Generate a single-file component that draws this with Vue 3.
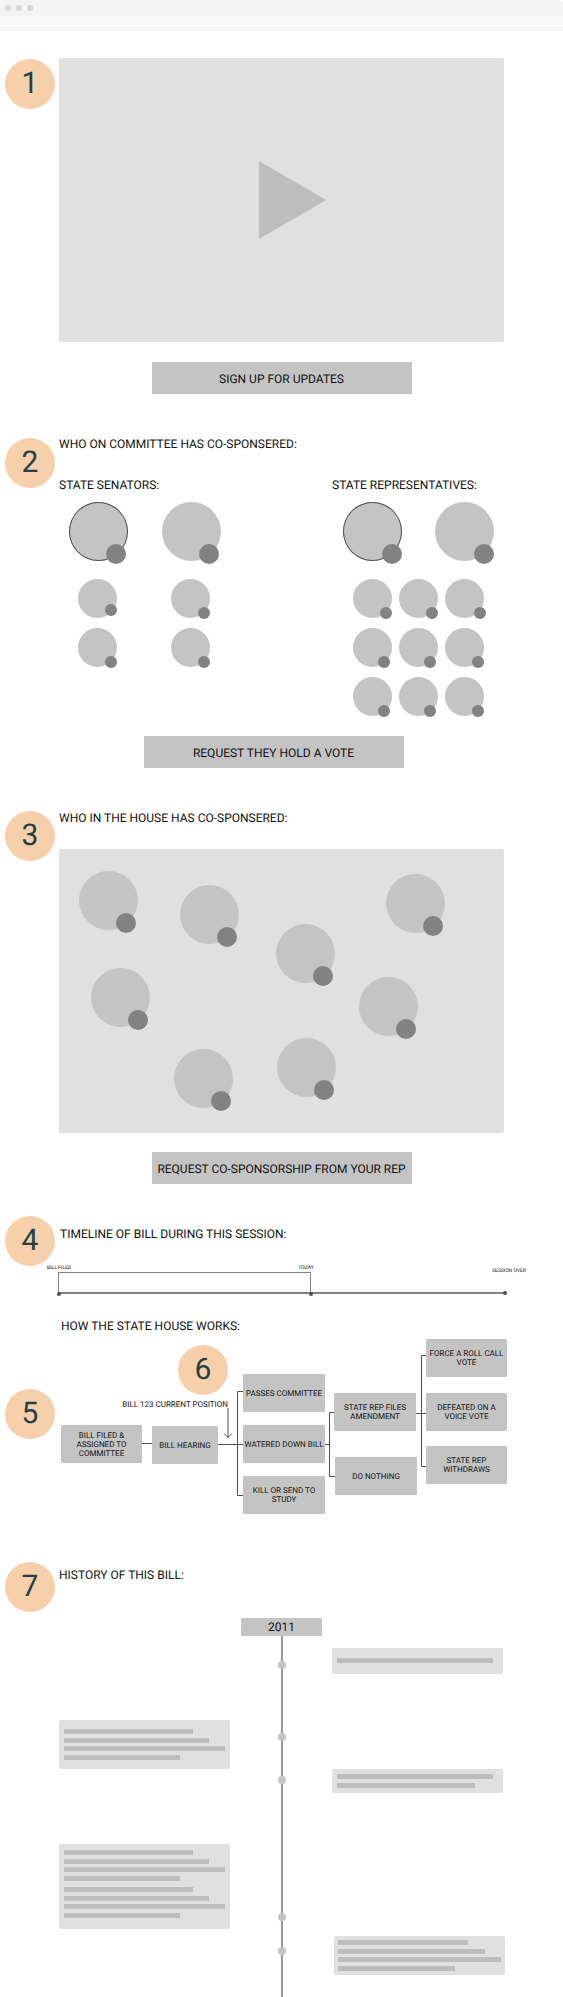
<script setup>
const CANVAS_WIDTH = 563
const pct = (n, total = CANVAS_WIDTH) => (n / total) * 100 + '%'

const senators = ['raised', '', '', '']
const representatives = ['', '', 'out', 'in', 'in', '', 'in', 'in', '']

const housePins = [
  { x: 20, y: 22 },
  { x: 121, y: 36 },
  { x: 327, y: 25 },
  { x: 217, y: 75 },
  { x: 32, y: 119 },
  { x: 300, y: 128 },
  { x: 115, y: 201 },
  { x: 218, y: 190 },
]
const pinStyle = (p) => ({ left: pct(p.x, 445), top: pct(p.y, 285) })

const sessionMarks = [
  { label: 'BILL FILED', x: 59, y: 2 },
  { label: 'TODAY', x: 306, y: 2 },
  { label: 'SESSION OVER', x: 509, y: 5 },
]
const sessionDots = [
  { x: 59, y: 28 },
  { x: 311, y: 28 },
  { x: 505, y: 27 },
]

const steps = [
  { text: 'BILL FILED &\nASSIGNED TO\nCOMMITTEE', x: 61, y: 86, w: 81 },
  { text: 'BILL HEARING', x: 152, y: 87, w: 66 },
  { text: 'PASSES COMMITTEE', x: 243, y: 35, w: 82 },
  { text: 'WATERED DOWN BILL', x: 243, y: 86, w: 82 },
  { text: 'KILL OR SEND TO\nSTUDY', x: 243, y: 137, w: 82 },
  { text: 'STATE REP FILES\nAMENDMENT', x: 334, y: 54, w: 82 },
  { text: 'DO NOTHING', x: 335, y: 118, w: 82 },
  { text: 'FORCE A ROLL CALL\nVOTE', x: 426, y: 0, w: 81 },
  { text: 'DEFEATED ON A\nVOICE VOTE', x: 426, y: 54, w: 81 },
  { text: 'STATE REP\nWITHDRAWS', x: 426, y: 107, w: 81 },
]
const stepStyle = (s) => ({ left: pct(s.x), top: s.y + 'px', width: pct(s.w) })

const fourLines = [[80, 90, 100, 72]]
const leftCards = [
  { kind: 'first', groups: fourLines },
  { kind: 'second', groups: [fourLines[0], fourLines[0]] },
]
const rightCards = [
  { kind: 'first', groups: [[97]] },
  { kind: 'second', groups: [[97, 86]] },
  { kind: 'third', groups: fourLines },
]
const historyDots = [25, 97, 140, 277, 311]
</script>

<template>
  <div class="page">
    <header class="chrome">
      <div class="chrome-tabs"><i></i><i></i><i></i></div>
      <div class="chrome-bar"></div>
    </header>

    <main>
      <section class="block intro">
        <span class="badge">1</span>
        <div class="content">
          <button class="video" type="button" aria-label="Play video">
            <svg viewBox="0 0 67 78" aria-hidden="true"><path d="M0 0L67 39L0 78Z" /></svg>
          </button>
          <button class="cta" type="button">SIGN UP FOR UPDATES</button>
        </div>
      </section>

      <section class="block committee">
        <span class="badge">2</span>
        <div class="content">
          <h2>WHO ON COMMITTEE HAS CO-SPONSERED:</h2>
          <div class="chambers">
            <div class="chamber senate">
              <h3>STATE SENATORS:</h3>
              <div class="leaders">
                <span class="avatar outlined"><i></i></span>
                <span class="avatar"><i></i></span>
              </div>
              <div class="members">
                <span v-for="(m, i) in senators" :key="i" class="avatar small" :class="m"><i></i></span>
              </div>
            </div>
            <div class="chamber house">
              <h3>STATE REPRESENTATIVES:</h3>
              <div class="leaders">
                <span class="avatar outlined"><i></i></span>
                <span class="avatar"><i></i></span>
              </div>
              <div class="members">
                <span v-for="(m, i) in representatives" :key="i" class="avatar small" :class="m"><i></i></span>
              </div>
            </div>
          </div>
          <div class="vote-row">
            <button class="cta" type="button">REQUEST THEY HOLD A VOTE</button>
          </div>
        </div>
      </section>

      <section class="block sponsors">
        <span class="badge">3</span>
        <div class="content">
          <h2>WHO IN THE HOUSE HAS CO-SPONSERED:</h2>
          <div class="map">
            <span v-for="(p, i) in housePins" :key="i" class="avatar pin" :style="pinStyle(p)"><i></i></span>
          </div>
          <button class="cta" type="button">REQUEST CO-SPONSORSHIP FROM YOUR REP</button>
        </div>
      </section>

      <section class="session">
        <div class="block">
          <span class="badge">4</span>
          <div class="content">
            <h2>TIMELINE OF BILL DURING THIS SESSION:</h2>
          </div>
        </div>
        <div class="session-line">
          <svg viewBox="0 0 563 32" preserveAspectRatio="none" aria-hidden="true">
            <path class="thin" d="M58.5 27V6.5H310.5V27" />
            <path class="thick" d="M58.5 27H505" />
          </svg>
          <i v-for="d in sessionDots" :key="d.x" :style="{ left: pct(d.x), top: d.y + 'px' }"></i>
          <span v-for="m in sessionMarks" :key="m.label" :style="{ left: pct(m.x), top: m.y + 'px' }">{{ m.label }}</span>
        </div>
      </section>

      <section class="process">
        <h2>HOW THE STATE HOUSE WORKS:</h2>
        <div class="flow">
          <svg viewBox="0 0 563 176" preserveAspectRatio="none" aria-hidden="true">
            <path d="M142 104.500H152M218 105.500H243M243 52.500H237.500V156.500H243" />
            <path d="M324 105.500H329.500M335 73.500H329.500V137.500H336" />
            <path d="M415 74.500H426M426 16.500H421.500V127.500H426" />
            <path class="arrow" d="M228 69V98.500M224 94.500L228 98.500L232 94.500" />
          </svg>
          <span class="badge five">5</span>
          <span class="badge six">6</span>
          <span class="position">BILL 123 CURRENT POSITION</span>
          <div v-for="s in steps" :key="s.text" class="step" :style="stepStyle(s)">{{ s.text }}</div>
        </div>
      </section>

      <section class="block history">
        <span class="badge">7</span>
        <div class="content">
          <h2>HISTORY OF THIS BILL:</h2>
          <div class="events">
            <div class="cards left">
              <article v-for="c in leftCards" :key="c.kind" class="card" :class="c.kind">
                <div v-for="(g, i) in c.groups" :key="i" class="lines" :class="'n' + g.length">
                  <i v-for="w in g" :key="w" :style="{ width: w + '%' }"></i>
                </div>
              </article>
            </div>
            <div class="axis">
              <div class="year">2011</div>
              <div class="rail">
                <i v-for="y in historyDots" :key="y" :style="{ top: y + 'px' }"></i>
              </div>
            </div>
            <div class="cards right">
              <article v-for="c in rightCards" :key="c.kind" class="card" :class="c.kind">
                <div v-for="(g, i) in c.groups" :key="i" class="lines" :class="'n' + g.length">
                  <i v-for="w in g" :key="w" :style="{ width: w + '%' }"></i>
                </div>
              </article>
            </div>
          </div>
        </div>
      </section>
    </main>
  </div>
</template>

<style>
body {
  margin: 0;
  background: #fefefe;
}
</style>

<style scoped>
.page {
  font-family: Roboto, "Liberation Sans", sans-serif;
  font-size: 12px;
  line-height: 16px;
  color: #111;
  text-rendering: geometricPrecision;
}
.page * {
  box-sizing: border-box;
}
h2,
h3 {
  margin: 0;
  font-size: 12px;
  font-weight: 400;
  line-height: 16px;
}
button {
  border: 0;
  padding: 0;
  font: inherit;
  color: inherit;
  text-rendering: inherit;
  cursor: pointer;
}

.chrome-tabs {
  display: flex;
  align-items: center;
  gap: 5px;
  height: 16px;
  padding: 0 5px;
  background: #f4f4f4;
  border-radius: 3px 3px 0 0;
}
.chrome-tabs i {
  width: 6px;
  height: 6px;
  border-radius: 50%;
  background: #d8d8d8;
}
.chrome-bar {
  height: 15px;
  background: #f8f8f8;
  border-bottom: 1px solid #f4f4f4;
}

.block {
  display: grid;
  grid-template-columns: 59px minmax(0, 1fr) 59px;
}
.content {
  display: flex;
  flex-direction: column;
}
.badge {
  display: flex;
  align-items: center;
  justify-content: center;
  width: 50px;
  height: 50px;
  margin-left: 5px;
  border-radius: 50%;
  background: #f6d0ab;
  color: #263f45;
  font-size: 30px;
  line-height: 50px;
}
.cta {
  align-self: center;
  width: 260px;
  height: 32px;
  padding-top: 2px;
  background: #c4c4c4;
}

.intro {
  padding-top: 27px;
}
.intro .badge {
  margin-top: 1px;
}
.video {
  display: grid;
  place-items: center;
  height: 284px;
  padding-left: 22px;
  margin-bottom: 20px;
  background: #e0e0e0;
  border-radius: 2px;
}
.video svg {
  width: 67px;
  height: 78px;
  fill: #bdbdbd;
}

.committee {
  padding-top: 42px;
}
.committee .badge {
  margin-top: 2px;
}
.chambers {
  display: grid;
  grid-template-columns: 273fr 172fr;
  margin-top: 25px;
}
.chamber h3 {
  white-space: nowrap;
}
.leaders {
  display: flex;
  gap: 34px;
  padding: 9px 0 18px 10px;
}
.members {
  display: grid;
  grid-template-columns: repeat(2, 39px);
  gap: 10px 54px;
  padding-left: 19px;
}
.house .members {
  grid-template-columns: repeat(3, 39px);
  column-gap: 7px;
  padding-left: 21px;
}
.house .leaders {
  gap: 33px;
  padding-left: 11px;
}
.avatar {
  position: relative;
  display: block;
  width: 59px;
  height: 59px;
  border-radius: 50%;
  background: #c4c4c4;
}
.outlined {
  box-shadow: inset 0 0 0 1px #4f4f4f;
}
.avatar i {
  position: absolute;
  right: 2px;
  bottom: -3px;
  width: 20px;
  height: 20px;
  border-radius: 50%;
  background: #828282;
}
.house .avatar i {
  right: 0;
}
.avatar.small {
  width: 39px;
  height: 39px;
}
.avatar.small i {
  right: 0;
  bottom: -1px;
  width: 12px;
  height: 12px;
}
.avatar.raised i {
  bottom: 2px;
}
.avatar.out i {
  right: -2px;
}
.avatar.in i {
  right: 2px;
}
.vote-row {
  display: flex;
  justify-content: center;
  margin-top: 20px;
  padding-right: 16px;
}

.sponsors {
  padding-top: 42px;
}
.sponsors .badge {
  margin-top: 1px;
}
.map {
  position: relative;
  height: 284px;
  margin: 23px 0 19px;
  background: #e0e0e0;
  border-radius: 2px;
}
.pin {
  position: absolute;
}

.session {
  padding-top: 32px;
}
.session h2 {
  padding: 10px 0 0 1px;
}
.session-line {
  position: relative;
  height: 32px;
}
.session-line svg,
.flow svg {
  display: block;
  width: 100%;
  height: 100%;
  fill: none;
  stroke: #4f4f4f;
}
.session-line path,
.flow path {
  vector-effect: non-scaling-stroke;
}
.session-line path.thin {
  stroke: #828282;
}
.session-line path.thick {
  stroke: #828282;
  stroke-width: 2;
}
.session-line i,
.session-line span {
  position: absolute;
  transform: translate(-50%, -50%);
}
.session-line i {
  width: 4px;
  height: 4px;
  border-radius: 50%;
  background: #4f4f4f;
}
.session-line span {
  font-size: 5px;
  line-height: 6px;
  white-space: nowrap;
}

.process h2 {
  padding: 20px 0 5px 61px;
}
.flow {
  position: relative;
  height: 176px;
}
.flow .badge {
  position: absolute;
  margin: 0;
}
.flow .five {
  left: 5px;
  top: 50px;
}
.flow .six {
  left: 31.6%;
  top: 6px;
}
.position {
  position: absolute;
  right: 59.5%;
  top: 61px;
  font-size: 8px;
  line-height: 9px;
  white-space: nowrap;
}
.step {
  position: absolute;
  display: flex;
  align-items: center;
  justify-content: center;
  height: 38px;
  border-radius: 1px;
  background: #c4c4c4;
  font-size: 8px;
  line-height: 9px;
  text-align: center;
  white-space: pre;
}

.history {
  padding-top: 47px;
}
.history h2 {
  padding-top: 5px;
}
.events {
  display: grid;
  grid-template-columns: minmax(0, 171fr) minmax(0, 103fr) minmax(0, 171fr);
  min-height: 379px;
  margin-top: 35px;
}
.axis {
  display: flex;
  flex-direction: column;
  align-items: center;
}
.year {
  width: 81px;
  height: 18px;
  background: #c4c4c4;
  line-height: 18px;
  text-align: center;
}
.rail {
  position: relative;
  flex: 1;
  width: 2px;
  background: #999;
}
.rail i {
  position: absolute;
  left: -3px;
  width: 8px;
  height: 8px;
  border-radius: 50%;
  background: #c4c4c4;
}
.right {
  margin: 0 1px 0 -1px;
}
.card {
  display: flex;
  flex-direction: column;
  gap: 6px;
  padding: 9px 5px;
  background: #e0e0e0;
  border-radius: 2px;
}
.lines {
  display: flex;
  flex-direction: column;
  flex-shrink: 0;
  justify-content: space-between;
}
.lines i {
  height: 5px;
  background: #bdbdbd;
}
.n2 {
  height: 14px;
}
.n4 {
  height: 31px;
}
.left .first {
  margin-top: 102px;
  height: 49px;
}
.left .second {
  margin-top: 75px;
  height: 85px;
  padding-top: 6px;
}
.right .first {
  margin-top: 30px;
  height: 26px;
  padding-top: 10px;
}
.right .second {
  margin-top: 95px;
  height: 24px;
  padding-top: 5px;
}
.right .third {
  margin: 143px -2px 0 2px;
  height: 39px;
  padding: 4px;
}
</style>
